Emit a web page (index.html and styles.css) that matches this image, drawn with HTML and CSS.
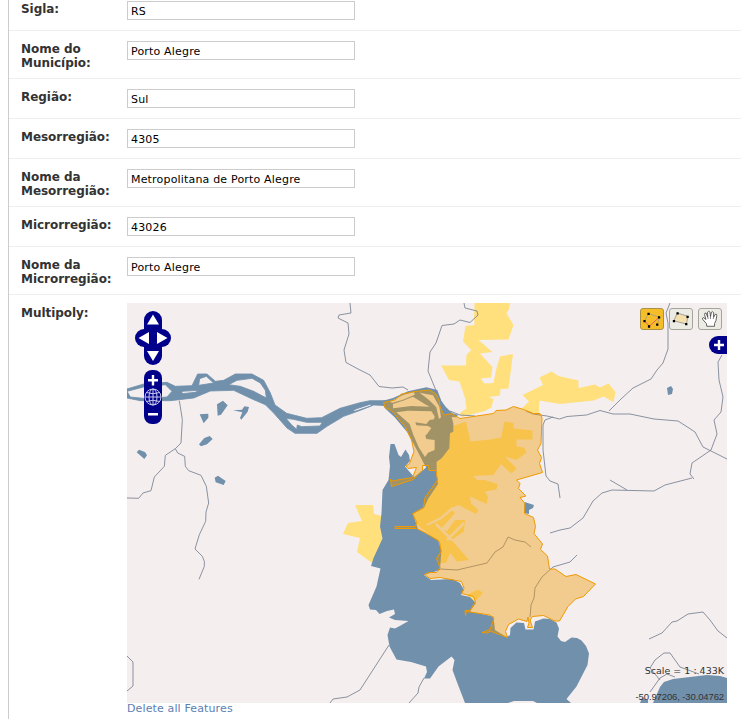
FILE: index.html
```html
<!DOCTYPE html>
<html lang="pt-BR">
<head>
<meta charset="utf-8">
<title>Município</title>
<link rel="stylesheet" href="styles.css">
</head>
<body>
<form class="module">
  <div class="row"><label for="sigla">Sigla:</label><input id="sigla" type="text" value="RS"></div>
  <div class="row"><label for="mun">Nome do Município:</label><input id="mun" type="text" value="Porto Alegre"></div>
  <div class="row"><label for="reg">Região:</label><input id="reg" type="text" value="Sul"></div>
  <div class="row"><label for="meso">Mesorregião:</label><input id="meso" type="text" value="4305"></div>
  <div class="row"><label for="nmeso">Nome da Mesorregião:</label><input id="nmeso" type="text" value="Metropolitana de Porto Alegre"></div>
  <div class="row"><label for="micro">Microrregião:</label><input id="micro" type="text" value="43026"></div>
  <div class="row"><label for="nmicro">Nome da Microrregião:</label><input id="nmicro" type="text" value="Porto Alegre"></div>
  <div class="row row-map">
    <label>Multipoly:</label>
    <div class="field">
      <div class="map">
        <svg class="canvas" viewBox="127 303 600 400" width="600" height="400">
          <g class="urban">
            <path d="M474.7 303H510L509 309 506.5 313.5 513.5 325 508.5 339.5 478.5 340 492.5 352 480 353.5 486 360 492.5 367 491 377.5 480.500 378.500 484.500 383.500 493.500 383 496 370 500 356.500 513 354 508.500 388.500 500.500 389 500 395.500 488.500 397 493.500 399 491.500 407.500 484.500 411 461.500 417 460 413 466.500 408.500 465 398 459.500 381.500 449 380 441 365.500 466 365.500 466.500 355 471.300 350 463 341.500 465.500 326 474.500 325 474 316.500Z"/>
            <path d="M551.5 371.500 558.500 376 578.500 380.500V388L595 384.500 600 387.500 608.500 383.500 615.500 392 613.500 402 603.500 396.500 593.500 400.500 560 404 539.500 400.500 538.500 415 521.500 408.500 529 401.500 522.500 395 543 385 539.500 377.500Z"/>
            <path d="M355 505H373L374 514 382 516 390 535 372 563 357 552 360 538 343 534 348 523 362 521Z"/>
            <path d="M449 430 453 426 466 421.500 470.500 441.500 490 439.500 501 437.500 504.500 421.500 513.500 423V428.500L532.500 430.500V439.500H516.500V446.500L524 447.500 526.500 452.500 516.500 460 505 456.500 516.500 468.500 511.500 473.500 501 464 493.500 475 473 476 477 480H485L497.500 484 496.500 489.500 485 491.500 488 497 486.500 504 470 496.500 471 503.500 478.500 510 476 514 458.500 505 450 508.500 455 513 441 529 447 531 455 520H465L464 531.500 451.500 540 469 560 457 561.500 450 553 446 563H436L430 535 405 515 425 470 430 455Z"/>
            <path d="M467 595 478 589.500 483 593 476.500 600 473 603Z"/>
          </g>
          <path class="streets" d="M427 525 441 518 453 508M436 524 452 540M447 540 464 523"/>
          <g class="water">
            <path class="river" transform="translate(127 303) scale(.33333)" fill-rule="evenodd" d="M0 258 50 243 120 238 145 250 195 248 212 213H240L265 235 290 232 325 213H375L410 232 430 270 444 306 479 331 539 346 584 344 639 316 699 299 729 293 775 293 785 308 740 306 700 322 650 340 600 370 570 391H504L480 375 440 330 415 305 380 290 320 262 250 264 200 285 130 293H40L0 285ZM0 265 50 252 115 245 135 265 120 282 60 287 10 282ZM165 265 215 262 205 268 165 272ZM215 247 218 227 238 220 260 240ZM305 245 330 232 375 226 400 240 415 262 418 285 380 265 340 250ZM477 346 499 349 539 358H586L579 369 524 371 511 366 509 379 494 366ZM677 323 689 317 732 303V309L684 325Z"/>
            <path transform="translate(127 303) scale(.33333)" d="M218 334 244 332V344L230 361ZM270 304 288 293 302 307 282 335 272 338ZM318 322 345 320 352 310 366 312 362 326 343 350 339 345 346 328ZM216 424 232 405 248 399 257 408 240 424 222 430ZM29 448 36 440 54 447 60 457 52 468ZM263 524 273 518 296 534 290 546 266 538Z"/>
            <path d="M667 388 671 386 673 389 672 394 668 395ZM524.500 502 534 505 533 508 529 510 529 514 524 513Z"/>
            <path transform="translate(378 384) scale(.33333)" fill-rule="evenodd" d="M10 52 45 42 90 22 145 10 178 18 190 50 203 68 215 80 224 88 240 92 236 100 221 99 226 118V143L216 148 214 193 191 223 176 233V263L170 280 130 290 140 265 150 258 140 243 106 178 88 145 50 100 20 72ZM45 60 75 50 105 38 140 60 155 68 100 66 45 73ZM35 54 75 33 108 24 110 32 75 47 44 56ZM125 26 165 34 184 68 189 100 183 105 175 70 153 48ZM55 85 90 80 160 82 170 97 168 106 155 108 145 120 112 115 115 124 150 126 160 132 149 148 142 155 145 165 170 168V198L150 206 141 219 122 190 105 150 95 120Z"/>
            <path d="M390.500 444H394.500L398.500 455 401 457 405.500 449.500 409 455 410 461 405 466.500 414 477 419 473.500 429 465 436 470.500 438 484 428 499 424 508 413 514 418 529 427 534 438 540 441.500 550 440 570 424 575 431 580 452 579 460 583 464 590 461 595 470 597 476 603 470 611.500 493.500 616.500 495 630 506.500 637 510 635 510.500 628 516.500 622.500 524 623 525.500 629.500H533.500L535 621.500 543.500 618.500 550 619 556.500 622.500 559 628.500 557.500 636.500 561 641 565 642 571.500 637.500 577 638 581.500 640.500 586 646 589 653.500 587.500 665 576.500 686.500 566.500 699 571 703H537L533 701H514L508 703H465L457.500 683.500 452.500 670 454.500 660 451.500 656.500 438.500 666.500 430 678.500H424L427 672 426 666.500 411 662 396.500 659.500 389.500 646.500 387.500 635 390 627.500 395 628.500 401.500 625 408.500 621 395 620 389 617.500 395 614 394 609.500 387 611 379.500 614 376 610 370 609.500 368.500 605 376.500 586.500 380.500 568.500 371 566 373.500 558 382.500 538.500 380 526.500 381.500 513 382.500 490 388.500 480 390 466 389 457Z"/>
            <path d="M653 703 660 687 664 682 673 679 690 677 707 675 720 676 727 678V703ZM640 703 642 698 648 700V703Z"/>
          </g>
          <g class="roads">
            <path transform="translate(127 303) scale(.33333)" d="M157 293 166 350 162 420 145 437 115 457 112 490 82 522 72 563 48 570 35 586 0 585M145 437 152 450 173 460 175 490 185 503 222 517 238 550 245 600 237 627 236 655 217 695 204 738 226 760 232 775V790L216 829"/>
            <path d="M350 303 351 313 339 315 338 318 348 323 349 334 344 350 346 362.500 358 369 370 375 379 386.500 392 388 403 387 408 390"/>
            <path d="M464 303 465 308 477 311 478 315 470 322.500 460 320 454 324 442 325.500 436 343 430 352 428 371 437 393"/>
            <path d="M450 411 460 415 475 416M526 411 533 414 547 416 559.500 419 567 416.500 586.500 415 600 410.500 613 414 630 414 654 419 678 421 689 428 695 432 703 447 727 459M553 417 545 420 543 425V450L546 476 550 481 558 484 560 498M609 411 621 399 633 388 651 379 657 370 663 363 668 349V323L666 313 670 303"/>
            <path d="M722 355 718 362 719 380 723 397 721 412 714 420 717 434 711 450 692 463 690 474 694 479M550 533 560 530 570 528 583 518 593 501 602 493 612 490 654 491 665 485 692 478M610 480 627 490M577 555 570 562 553 567 542 577 535 588 534 598 531 605 530 617"/>
            <path d="M440 569 457 570 487 563 495 552 503 547 508 537 515 540 525 542 531 547M389 645 360 690 347 697 333 699 330 703M127 656 133 662V686L127 691M424 678 419 687 418 693 409 703"/>
            <path d="M649 639 662 633 672 622 677 621 688 614 703 612 710 620 718 631 727 638M699 674 680 667 670 653H664L655 660 650 668 660 680M650 692 660 678 667 674 675 677"/>
          </g>
          <path class="feature" d="M383.500 402.500 395 400 401.500 394 415 391.500 429.500 390 436 394 439 400 440 406.500 444 415 451.500 413.500 460 418.500 493.500 413.500 496 410.500 506 410 513.500 406.500 523.500 409.500 533.500 413.500H540L542 417.500 541 443.500 537.500 450 541.500 457.500 539.500 463.500 542.500 472.500 516.500 480 520 483.500 518.500 488.500 526 496 520 497.500 525 503.500 524.500 513.500 533.500 517.500 535.500 526.500 534 533.500 542.500 544 540.500 549.500 547.500 556 549.500 569H555L566 576.500 576 574.500 595.500 584 583.500 596.500 575.500 599 568 606.500 559.500 621H555L543.500 615.500 532.500 616.500 530 620 532.500 627.500H527.500L529 623 528 617 527 621.500 518.500 619 508.500 624.500 505.500 631.500 507.500 637.500 490 631 488 633 482 632.500 490 629.500 494 618.500 490 615 466.500 611.500 465.500 615.500 465 610.500H470L475.500 601.500 473.500 596.500 461.500 593.500 464 588.500 461.500 581.500 440 577.500 430 578.500 424.500 574.500 428.500 572.500H436.500L440 567.500 436.500 558.500 441 551.500 439.500 541.500 426.500 533.500 416.500 528.500H395V526.500H415L417 523 412.500 513.500 423.500 507.500 425 497.500 437.500 480 436 470.500H429L428.500 465.500 422.500 465.500V470L419 473.500 413.500 479.500 391.500 486.500 390.500 479 391.500 481 412.500 477.500 416.500 467.500 408 468.500 406 466 409.500 463.500 414 451.500 411.500 440 405 426.500 391.500 410.500 385 407.500Z"/>
        </svg>

        <svg class="pan-zoom" viewBox="0 0 36 114" width="36" height="114">
          <g fill="#00008b">
            <rect x="9" width="18" height="54" rx="9"/><rect y="18" width="36" height="18" rx="9"/>
            <rect x="9" y="59" width="18" height="54" rx="8"/>
          </g>
          <path fill="#fff" d="M18 3.500 24 13.500H12ZM18 50 24 40H12ZM3.500 27 14 21V33ZM32.500 27 22 21V33ZM16.800 64H19.200V68H23V70.400H19.200V74.500H16.800V70.400H13V68H16.800ZM13 102H23V104.500H13Z"/>
          <g fill="none" stroke="#c9c9ec" stroke-width="1"><circle cx="18" cy="86" r="8"/><ellipse cx="18" cy="86" rx="4" ry="8"/><path d="M18 78V94M10 86H26M11.500 81.500Q18 84 24.500 81.500M11.500 90.500Q18 88 24.500 90.500"/></g>
        </svg>

        <div class="tools">
          <svg class="tool active" viewBox="0 0 24 22" width="24" height="22"><path d="M4 13 8 5 20 9 18 17" fill="none" stroke="#aaa17c"/><path d="M4 13 9 19 20 9" fill="none" stroke="#f25555"/><path d="M2.500 12H5V14.500H2.500ZM7 4H9.500V6.500H7ZM18.500 8H21V10.500H18.500ZM7.500 18H10V20.500H7.500ZM16.500 16H19V18.500H16.500Z"/></svg>
          <svg class="tool" viewBox="0 0 24 22" width="24" height="22"><path d="M8 4.500 19.500 8 18 16.500 4 13Z" fill="#f5dfab" stroke="#999"/><path d="M7 3.500H9.500V6H7ZM18 7.500H20.500V10H18ZM3 12H5.500V14.500H3ZM16.500 15.500H19V18H16.500Z"/></svg>
          <svg class="tool" viewBox="0 0 24 22" width="24" height="22"><path d="M8.500 19 8 16 4 11.500Q3 9.500 5 9.500L7.500 11.500 6 6Q6 4 7.700 4.500L9.500 9 9.300 3.500Q10.500 1.500 12 3.500L12.500 8.500 13.600 3.500Q15 2.200 16 4V9L17.600 6Q19.500 5 19.500 7L18.500 13 17 16V19Z" fill="#fff" stroke="#444" stroke-width=".9"/><path d="M9.500 9 10 11M12.500 8.500V11M16 9 15.500 11" stroke="#555" stroke-width=".8"/></svg>
        </div>
        <svg class="layers" viewBox="0 0 18 18" width="18" height="18"><path fill="#00008b" d="M18 0H9A9 9 0 0 0 9 18H18Z"/><path d="M5 9H15M10 4V14" stroke="#fff" stroke-width="2.400"/></svg>
        <div class="scale">Scale = 1 : 433K</div>
        <div class="coords">-50.97206, -30.04762</div>
      </div>
      <a class="clear" href="#">Delete all Features</a>
    </div>
  </div>
</form>
</body>
</html>
```
FILE: styles.css
```css
html {
  overflow: hidden;
}

body {
  margin: 0;
  background: #fff;
  color: #333;
  font: 12px/14px "DejaVu Sans", sans-serif;
}

.module {
  margin: -9px 0 0 8px;
  border-left: 1px solid #ccc;
}

.row {
  display: grid;
  grid-template-columns: 106px 1fr;
  align-items: start;
  padding: 10px 0 10px 12px;
  border-bottom: 1px solid #eee;
}

.row label {
  width: 96px;
  margin: 1px 0 -2px;
  font-weight: bold;
  letter-spacing: -0.040px;
}

.row input {
  box-sizing: border-box;
  width: 228px;
  height: 19px;
  padding: 2px 3px 1px;
  border: 1px solid #ccc;
  border-radius: 0;
  background: #fff;
  color: #000;
  font: 11px "DejaVu Sans", sans-serif;
  letter-spacing: 0.180px;
}

.row-map {
  padding-top: 8px;
  border-bottom: 0;
}

.row-map label {
  margin-top: 3px;
}

.map {
  position: relative;
  width: 600px;
  height: 400px;
  overflow: hidden;
  background: #f5eeee;
}

.canvas {
  display: block;
}

.urban {
  fill: #ffe07c;
}

.streets {
  fill: none;
  stroke: #f5eeee;
  stroke-width: 2.500;
}

.water {
  fill: #7190ac;
}

.river {
  stroke: #7190ac;
  stroke-width: 2.500;
  stroke-linejoin: round;
}

.roads {
  fill: none;
  stroke: #7d8796;
  stroke-width: 0.900;
  stroke-linejoin: round;
}

.roads [transform] {
  stroke-width: 2.700;
}

.feature {
  fill: #ee9900;
  fill-opacity: 0.400;
  stroke: #ee9900;
  stroke-width: 1;
}

.pan-zoom {
  position: absolute;
  top: 8px;
  left: 8px;
}

.tools {
  position: absolute;
  top: 5px;
  right: 5px;
  display: flex;
  gap: 5px;
}

.tool {
  box-sizing: border-box;
  width: 24px;
  height: 22px;
  border: 1px solid #a4a49c;
  border-radius: 3px;
  background: #ecebe4;
}

.tool.active {
  border-color: #a79245;
  background: #f6bd2b;
}

.layers {
  position: absolute;
  top: 33px;
  right: 0;
}

.scale,
.coords {
  position: absolute;
  right: 3px;
  white-space: nowrap;
}

.scale {
  bottom: 25px;
  font-size: 9.500px;
}

.coords {
  bottom: -1px;
  font-family: "Liberation Sans", sans-serif;
  font-size: 9.500px;
  letter-spacing: -0.120px;
}

.clear {
  display: block;
  margin-top: -1px;
  color: #5b80b2;
  font-size: 11px;
  letter-spacing: 0.130px;
  text-decoration: none;
}
```
